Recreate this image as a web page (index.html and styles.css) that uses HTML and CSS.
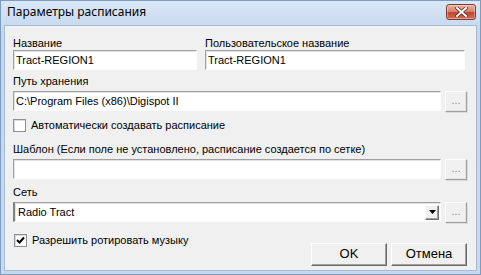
FILE: index.html
```html
<!DOCTYPE html>
<html>
<head>
<meta charset="utf-8">
<link rel="stylesheet" href="styles.css">
</head>
<body>
<div class="window">
  <div class="titlebar">
    <span class="title">Параметры расписания</span>
    <div class="close">
      <svg width="13" height="10" viewBox="0 0 13 10">
        <path d="M2 1 L11 9 M11 1 L2 9" stroke="#4a2a26" stroke-width="3.4" stroke-linecap="square"/>
        <path d="M2 1 L11 9 M11 1 L2 9" stroke="#ffffff" stroke-width="2" stroke-linecap="square"/>
      </svg>
    </div>
  </div>
  <div class="client">
    <div class="pair">
      <div class="field name">
        <div class="label">Название</div>
        <div class="edit">Tract-REGION1</div>
      </div>
      <div class="field uname">
        <div class="label">Пользовательское название</div>
        <div class="edit">Tract-REGION1</div>
      </div>
    </div>

    <div class="label path-label">Путь хранения</div>
    <div class="browse-row">
      <div class="edit grow">C:\Program Files (x86)\Digispot II</div>
      <div class="dots">...</div>
    </div>

    <div class="check check-auto">
      <span class="box"></span>
      <span>Автоматически создавать расписание</span>
    </div>

    <div class="label tpl-label">Шаблон (Если поле не установлено, расписание создается по сетке)</div>
    <div class="browse-row">
      <div class="edit grow"></div>
      <div class="dots">...</div>
    </div>

    <div class="label net-label">Сеть</div>
    <div class="browse-row">
      <div class="edit combo grow">
        <span class="combo-text">Radio Tract</span>
        <span class="arrow">
          <svg width="7" height="4" viewBox="0 0 7 4"><path d="M0 0 H7 L3.5 4 Z" fill="#000"/></svg>
        </span>
      </div>
      <div class="dots">...</div>
    </div>

    <div class="bottom">
      <div class="check check-rot">
        <span class="box checked">
          <svg width="9" height="9" viewBox="0 0 9 9"><path d="M1 4 L3.5 6.5 L8 1.5" fill="none" stroke="#000" stroke-width="2"/></svg>
        </span>
        <span>Разрешить ротировать музыку</span>
      </div>
      <div class="buttons">
        <div class="btn ok">OK</div>
        <div class="btn cancel">Отмена</div>
      </div>
    </div>
  </div>
</div>
</body>
</html>
```

FILE: styles.css
```css
* { box-sizing: border-box; }
html, body {
  margin: 0;
  padding: 0;
  width: 481px;
  height: 275px;
  overflow: hidden;
  background: #c5d8ee;
}
.window {
  width: 481px;
  height: 275px;
  background: linear-gradient(#dae7f6, #c4d7ee 30px, #c6d9ef);
  border: 1px solid #7e9cc0;
  display: flex;
  flex-direction: column;
  font-family: "Liberation Sans", Arial, sans-serif;
  font-size: 11px;
  color: #000;
}
.titlebar {
  height: 24px;
  flex: none;
  display: flex;
  align-items: flex-start;
  justify-content: space-between;
  padding: 0 4px 0 6px;
}
.title {
  font-family: "Noto Sans", "Open Sans", sans-serif;
  font-size: 12px;
  line-height: 16px;
  padding-top: 3px;
  color: #000;
}
.close {
  width: 30px;
  height: 16px;
  margin-top: 3px;
  border: 1px solid #7a3a30;
  border-radius: 3px;
  background: linear-gradient(#eab0a2, #d98672 45%, #c2422c 55%, #d0705a);
  display: flex;
  align-items: center;
  justify-content: center;
  box-shadow: inset 0 0 0 1px rgba(255,255,255,0.35);
}
.client {
  flex: 1;
  margin: 0 3px 3px 3px;
  background: #f0f0f0;
  border: 1px solid #a6bad2;
  padding: 11px 9px 0 8px;
}
.label {
  height: 13px;
  line-height: 13px;
  white-space: nowrap;
}
.pair {
  display: flex;
  gap: 8px;
}
.field.name { width: 184px; }
.field.uname { width: 260px; }
.field .edit { margin-top: 0; }
.edit {
  height: 20px;
  background: #fff;
  border-top: 1px solid #a0a0a0;
  border-left: 1px solid #a0a0a0;
  border-right: 1px solid #fdfdfd;
  border-bottom: 1px solid #fdfdfd;
  box-shadow: inset 1px 1px 0 #e3e3e3;
  padding-left: 2px;
  line-height: 18px;
  white-space: nowrap;
  overflow: hidden;
}
.path-label { margin-top: 5px; }
.browse-row {
  display: flex;
  align-items: flex-start;
  gap: 4px;
  margin-top: 3px;
}
.grow { flex: 1; }
.dots {
  width: 22px;
  height: 21px;
  background: #f0f0f0;
  border: 1px solid #fff;
  border-right-color: #a0a0a0;
  border-bottom-color: #a0a0a0;
  box-shadow: 1px 1px 0 #dcdcdc, inset -1px -1px 0 #e3e3e3;
  color: #8a8a8a;
  text-align: center;
  line-height: 16px;
  font-size: 11px;
  letter-spacing: 0;
}
.check {
  display: flex;
  align-items: center;
  gap: 5px;
  height: 13px;
  line-height: 13px;
  white-space: nowrap;
}
.check-auto { margin-top: 7px; }
.box {
  width: 13px;
  height: 13px;
  background: #fff;
  border: 1px solid #8e8f8f;
  box-shadow: inset 1px 1px 0 #dcdcdc;
  display: flex;
  align-items: center;
  justify-content: center;
  flex: none;
}
.tpl-label { margin-top: 11px; }
.net-label { margin-top: 6px; }
.combo {
  display: flex;
  align-items: center;
  justify-content: space-between;
  border-left: 2px solid #808080;
  padding-left: 3px;
  padding-right: 1px;
}
.combo-text { line-height: 18px; }
.arrow {
  width: 14px;
  height: 15px;
  background: #f0f0f0;
  border: 1px solid #fff;
  border-right-color: #707070;
  border-bottom-color: #707070;
  box-shadow: inset -1px -1px 0 #a0a0a0;
  display: flex;
  align-items: center;
  justify-content: center;
}
.bottom {
  display: flex;
  justify-content: space-between;
  align-items: flex-start;
}
.check-rot { margin-top: 11px; margin-left: 1px; }
.buttons {
  display: flex;
  gap: 4px;
  margin-top: 20px;
}
.btn {
  width: 76px;
  height: 23px;
  background: #f0f0f0;
  border: 1px solid #fff;
  border-right-color: #696969;
  border-bottom-color: #696969;
  box-shadow: inset -1px -1px 0 #a0a0a0;
  text-align: center;
  line-height: 20px;
  font-size: 13px;
}
```
